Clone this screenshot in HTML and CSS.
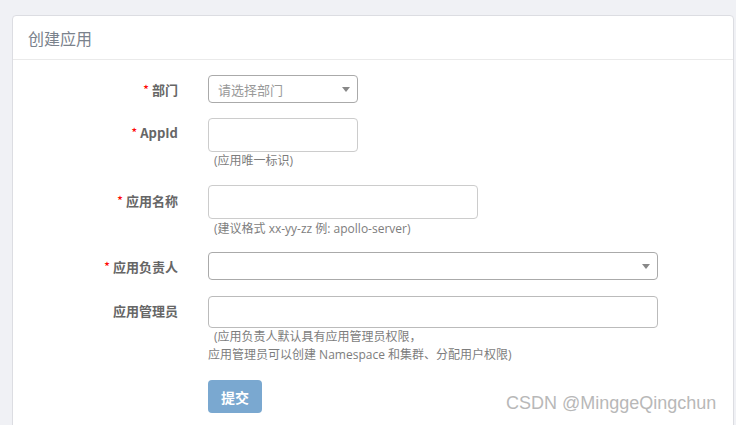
FILE: index.html
```html
<!DOCTYPE html>
<html>
<head>
<meta charset="utf-8">
<link rel="stylesheet" href="styles.css">
</head>
<body>
<div class="panel">
  <div class="panel-heading">创建应用</div>
  <div class="panel-body">
    <div class="row r1">
      <label class="label"><span class="req">*</span> 部门</label>
      <div class="ctrl">
        <div class="select w150"><span class="placeholder">请选择部门</span><span class="arrow"></span></div>
      </div>
    </div>
    <div class="row r2">
      <label class="label"><span class="req">*</span> AppId</label>
      <div class="ctrl">
        <div class="input w150"></div>
        <div class="help">(应用唯一标识)</div>
      </div>
    </div>
    <div class="row r3">
      <label class="label"><span class="req">*</span> 应用名称</label>
      <div class="ctrl">
        <div class="input w270"></div>
        <div class="help">(建议格式 xx-yy-zz 例: apollo-server)</div>
      </div>
    </div>
    <div class="row r4">
      <label class="label"><span class="req">*</span> 应用负责人</label>
      <div class="ctrl">
        <div class="select w450"><span class="placeholder"></span><span class="arrow"></span></div>
      </div>
    </div>
    <div class="row r5">
      <label class="label">应用管理员</label>
      <div class="ctrl">
        <div class="input w450 h32"></div>
        <div class="help">(应用负责人默认具有应用管理员权限，<br>应用管理员可以创建 Namespace 和集群、分配用户权限)</div>
      </div>
    </div>
    <div class="row r6">
      <div class="label"></div>
      <div class="ctrl">
        <button class="btn">提交</button>
      </div>
    </div>
  </div>
</div>
<div class="watermark">CSDN @MinggeQingchun</div>
</body>
</html>
```
FILE: styles.css
```css
html, body {
  margin: 0;
  padding: 0;
}
body {
  background: #f0f1f5;
  font-family: "Noto Sans CJK SC", "Noto Sans", sans-serif;
  font-size: 13px;
  color: #666;
  width: 736px;
  height: 425px;
  overflow: hidden;
  position: relative;
}
.panel {
  margin: 15px 2px 0 12px;
  background: #fff;
  border: 1px solid #dcdde2;
  border-radius: 4px;
  height: 440px;
  box-sizing: border-box;
}
.panel-heading {
  height: 43px;
  line-height: 44px;
  padding-left: 15px;
  font-size: 16px;
  color: #7a828c;
  border-bottom: 1px solid #eaeaea;
}
.panel-body {
  padding-top: 15px;
}
.row {
  display: flex;
  align-items: flex-start;
}
.label {
  width: 165px;
  margin-right: 30px;
  text-align: right;
  font-weight: bold;
  font-size: 13px;
  color: #666;
  line-height: 18px;
  flex: none;
}
.req {
  color: #f00;
  font-weight: normal;
}
.r1 .label { padding-top: 6px; }
.r2 { margin-top: 15px; }
.r2 .label { padding-top: 6px; }
.r3 { margin-top: 15px; }
.r3 .label { padding-top: 7px; }
.r4 { margin-top: 14px; }
.r4 .label { padding-top: 6px; }
.r5 { margin-top: 16px; }
.r5 .label { padding-top: 6px; }
.r6 { margin-top: 16px; }
.ctrl {
  flex: none;
}
.select {
  height: 28px;
  box-sizing: border-box;
  border: 1px solid #aaa;
  border-radius: 4px;
  display: flex;
  align-items: center;
  justify-content: space-between;
  padding: 0 7px 0 9px;
}
.placeholder {
  color: #999;
  font-size: 13px;
}
.arrow {
  width: 0;
  height: 0;
  border-left: 4px solid transparent;
  border-right: 4px solid transparent;
  border-top: 5px solid #888;
}
.input {
  height: 34px;
  box-sizing: border-box;
  border: 1px solid #ccc;
  border-radius: 4px;
}
.input.h32 { height: 32px; border-color: #bbb; }
.w150 { width: 150px; }
.w270 { width: 270px; }
.w450 { width: 450px; }
.help {
  font-family: "Open Sans", "Noto Sans CJK SC", sans-serif;
  font-size: 12px;
  line-height: 18px;
  color: #7d7d7d;
  text-indent: 6px;
  margin-top: 0;
}
.r3 .help { margin-top: 1px; }
.btn {
  width: 54px;
  height: 33px;
  padding: 0;
  border: none;
  border-radius: 4px;
  background: #7aa8d0;
  color: #fff;
  font-family: "Noto Sans CJK SC", sans-serif;
  font-size: 14px;
  font-weight: bold;
  display: block;
}
.watermark {
  position: absolute;
  left: 506px;
  top: 393px;
  font-family: "Liberation Sans", Arial, sans-serif;
  font-size: 18px;
  color: #b8b8b8;
}
```
